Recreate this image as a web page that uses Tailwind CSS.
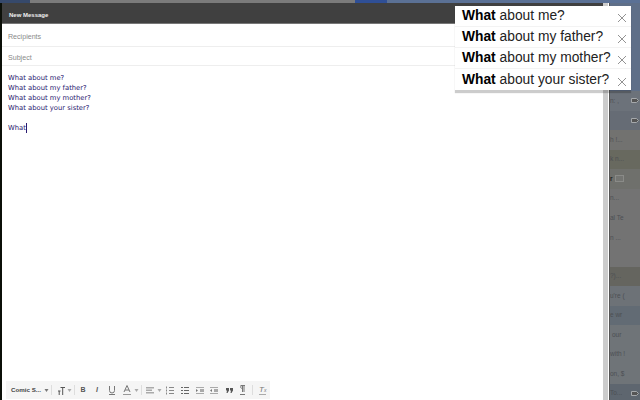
<!DOCTYPE html>
<html lang="en">
<head>
    <meta charset="UTF-8">
    <title>New Message</title>
    <script src="https://cdn.jsdelivr.net/npm/@tailwindcss/browser@4"></script>
</head>
<body class="w-[640px] h-[400px] overflow-hidden relative bg-[#6f7173] font-['Liberation_Sans',sans-serif]">
    <!-- strip of page above the compose window -->
    <div class="flex h-[3px]">
        <div class="w-[30px] bg-[#36496b]"></div>
        <div class="w-[325px] bg-[#7b7b7b]"></div>
        <div class="w-[32px] bg-[#2f4f96]"></div>
        <div class="flex-1 bg-[#5b7195]"></div>
    </div>

    <div class="flex h-[397px]">
        <div class="w-[2px] bg-[#0b0f08]"></div>

        <!-- compose window -->
        <div class="w-[601px] flex flex-col bg-white">
            <div class="h-[21px] shrink-0 bg-[#404040] border-b border-[#777] flex items-center pl-[7px] pt-[4px] text-[6px] font-bold text-[#f0f0f0]">New Message</div>
            <div class="h-[23px] shrink-0 border-b border-[#eee] flex items-center pl-[6px] pt-[4px] text-[7.1px] text-[#8a8a8a]">Recipients</div>
            <div class="h-[19px] shrink-0 border-b border-[#eee] flex items-center pl-[6px] pt-[4px] text-[7.1px] text-[#8a8a8a]">Subject</div>
            <div class="flex-1 pl-[6px] pt-[7px] font-['DejaVu_Sans',sans-serif] text-[6.8px] leading-[10px] text-[#2a1a70]">
                <p>What about me?</p>
                <p>What about my father?</p>
                <p>What about my mother?</p>
                <p>What about your sister?</p>
                <p class="mt-[10px] flex items-center">What<span class="w-px h-[10px] bg-[#2a1a70]"></span></p>
            </div>
            <!-- format toolbar -->
            <div class="h-[18px] w-[264px] ml-[4px] mb-[1px] shrink-0 bg-[#f5f5f5] flex items-center text-[#666] text-[7px]">
                <span class="ml-[5px] w-[30px] whitespace-nowrap text-[6.2px] font-bold text-[#444]">Comic S...</span>
                <svg class="ml-[3px] w-[5px] h-[3px]" viewBox="0 0 5 3" fill="#777"><path d="M0.500 0h4L2.500 3z"/></svg>
                <span class="w-px h-[10px] bg-[#ddd] ml-[2px]"></span>
                <svg class="ml-[6px] w-[7px] h-[9px]" viewBox="0 0 7 9" fill="none" stroke="#555"><path d="M0 5h2.500M1.200 5v4M2.500 1.500h4.500M4.700 1.500v7.500"/></svg>
                <svg class="ml-[2px] w-[5px] h-[3px]" viewBox="0 0 5 3" fill="#aaa"><path d="M0.500 0h4L2.500 3z"/></svg>
                <span class="w-px h-[10px] bg-[#ddd] ml-[2px]"></span>
                <span class="ml-[4px] w-[8px] font-bold text-center text-[#555]">B</span>
                <span class="ml-[6px] w-[8px] italic font-bold text-center text-[#555]">I</span>
                <svg class="ml-[7px] w-[8px] h-[9px]" viewBox="0 0 8 9" fill="none" stroke="#777"><path d="M1.500 0v4.500a2.500 2.500 0 0 0 5 0V0M1 8.500h6"/></svg>
                <svg class="ml-[7px] w-[8px] h-[10px]" viewBox="0 0 8 10" fill="none" stroke="#777"><path d="M1 7L4 0.500 7 7M2 5h4"/><path d="M0 9.500h8" stroke="#999"/></svg>
                <svg class="ml-[3px] w-[5px] h-[3px]" viewBox="0 0 5 3" fill="#aaa"><path d="M0.500 0h4L2.500 3z"/></svg>
                <span class="w-px h-[10px] bg-[#ddd] ml-[2px]"></span>
                <svg class="ml-[4px] w-[8px] h-[7px]" viewBox="0 0 8 7" fill="#aaa"><path d="M0 0h8v1.500H0zM0 2.500h6V4H0zM0 5h8v1.500H0z"/></svg>
                <svg class="ml-[3px] w-[5px] h-[3px]" viewBox="0 0 5 3" fill="#aaa"><path d="M0.500 0h4L2.500 3z"/></svg>
                <svg class="ml-[4px] w-[8px] h-[9px]" viewBox="0 0 8 9" stroke="#888"><path d="M3 1.500h5M3 4.500h5M3 7.500h5M0.500 0.500v2M0.500 3.500v2M0.500 6.500v2"/></svg>
                <svg class="ml-[7px] w-[8px] h-[9px]" viewBox="0 0 8 9" stroke="#666"><path d="M3 1.500h5M3 4.500h5M3 7.500h5M0 1.500h2M0 4.500h2M0 7.500h2"/></svg>
                <svg class="ml-[7px] w-[8px] h-[7px]" viewBox="0 0 8 7" fill="#aaa"><path d="M0 0h8v1H0zM0 6h8v1H0zM4 2h4v3H4z"/><path d="M0 2l2 1.500L0 5z" fill="#777"/></svg>
                <svg class="ml-[6px] w-[8px] h-[7px]" viewBox="0 0 8 7" fill="#aaa"><path d="M0 0h8v1H0zM0 6h8v1H0zM4 2h4v3H4z"/><path d="M2 2L0 3.500 2 5z" fill="#777"/></svg>
                <svg class="ml-[8px] w-[7px] h-[5px]" viewBox="0 0 7 5" fill="#555"><path d="M0 0h3v2.500L1.500 5H0.500L1 2.500H0zM4 0h3v2.500L5.500 5h-1L5 2.500H4z"/></svg>
                <svg class="ml-[7px] w-[5px] h-[10px]" viewBox="0 0 5 10" fill="none" stroke="#777"><path d="M0.500 0.500h4.500M2.500 0.500v6.500M4 0.500v6.500M2.500 3.500C0 3.500 0 0.500 2.500 0.500M0 9.500h5"/></svg>
                <span class="w-px h-[10px] bg-[#ddd] ml-[7px]"></span>
                <span class="ml-[6px] italic text-[8px] text-[#777] border-b border-[#aaa] leading-[8px]">T<span class="text-[5px]">x</span></span>
            </div>
        </div>

        <!-- compose scrollbar -->
        <div class="w-[5px] bg-[#cccccc]"></div>
        <div class="w-px bg-white"></div>
        <div class="w-px bg-[#555]"></div>

        <!-- dimmed message list behind the window -->
        <div class="flex-1 flex flex-col text-[6.5px] text-[#4c4f53] overflow-hidden">
            <div class="h-[88px] shrink-0 bg-[#5f6f88]"></div>
            <div class="h-[19.500px] shrink-0 bg-[#6c727a] flex items-center justify-between pr-[1px]">n: ,<svg class="w-[8px] h-[5px]" viewBox="0 0 8 5" fill="#555" stroke="#a5a8ab"><path d="M0.500 0.500h5l2 2-2 2h-5z"/></svg></div>
            <div class="h-[19.500px] shrink-0 bg-[#666c75] flex items-center justify-end pr-[1px]"><svg class="w-[8px] h-[5px]" viewBox="0 0 8 5" fill="#555" stroke="#a5a8ab"><path d="M0.500 0.500h5l2 2-2 2h-5z"/></svg></div>
            <div class="h-[19.500px] shrink-0 bg-[#727270] flex items-center">h !...</div>
            <div class="h-[19.500px] shrink-0 bg-[#68695f] flex items-center">k n...</div>
            <div class="h-[19.500px] shrink-0 bg-[#6f706c] flex items-center font-bold text-[#222]">r<span class="ml-[2px] w-[9px] h-[7px] border border-[#8a8b88] bg-[#747572]"></span></div>
            <div class="h-[19.500px] shrink-0 bg-[#737373] flex items-center">n...</div>
            <div class="h-[19.500px] shrink-0 bg-[#737373] flex items-center">al Te</div>
            <div class="h-[39px] shrink-0 bg-[#737373] pt-[5px]">n ...</div>
            <div class="h-[19.500px] shrink-0 bg-[#65655f] flex items-center">?)...</div>
            <div class="h-[19.500px] shrink-0 bg-[#6d7277] flex items-center">u're (</div>
            <div class="h-[19.500px] shrink-0 bg-[#626b74] flex items-center">e wr</div>
            <div class="h-[19.500px] shrink-0 bg-[#6f7478] flex items-center pl-[2px]">our</div>
            <div class="h-[19.500px] shrink-0 bg-[#6f7478] flex items-center">with !</div>
            <div class="h-[19.500px] shrink-0 bg-[#6f7478] flex items-center">on, $</div>
            <div class="h-[19.500px] shrink-0 bg-[#5e666f] flex items-center justify-between pr-[1px]">To...<svg class="w-[8px] h-[5px]" viewBox="0 0 8 5" fill="#555" stroke="#a5a8ab"><path d="M0.500 0.500h5l2 2-2 2h-5z"/></svg></div>
        </div>
    </div>

    <!-- autocomplete popup over the window -->
    <div class="absolute left-[455px] top-[6px] w-[176px] bg-white shadow-[0_3px_1px_rgba(0,0,0,0.2)] text-[13.8px] text-[#222]">
        <div class="h-[21px] flex items-center justify-between pl-[7px] pr-[4px] border-b border-[#f3f3f3]"><span class="pt-[1px]"><b class="text-black">What</b> about me?</span><svg class="w-[10px] h-[10px] mt-[4px]" viewBox="0 0 10 10" stroke="#777" stroke-width="0.8"><path d="M1 1l8 8M9 1l-8 8"/></svg></div>
        <div class="h-[21px] flex items-center justify-between pl-[7px] pr-[4px] border-b border-[#f3f3f3]"><span class="pt-[1px]"><b class="text-black">What</b> about my father?</span><svg class="w-[10px] h-[10px] mt-[4px]" viewBox="0 0 10 10" stroke="#777" stroke-width="0.8"><path d="M1 1l8 8M9 1l-8 8"/></svg></div>
        <div class="h-[21px] flex items-center justify-between pl-[7px] pr-[4px] border-b border-[#f3f3f3]"><span class="pt-[1px]"><b class="text-black">What</b> about my mother?</span><svg class="w-[10px] h-[10px] mt-[4px]" viewBox="0 0 10 10" stroke="#777" stroke-width="0.8"><path d="M1 1l8 8M9 1l-8 8"/></svg></div>
        <div class="h-[21px] flex items-center justify-between pl-[7px] pr-[4px]"><span class="pt-[1px]"><b class="text-black">What</b> about your sister?</span><svg class="w-[10px] h-[10px] mt-[4px]" viewBox="0 0 10 10" stroke="#777" stroke-width="0.8"><path d="M1 1l8 8M9 1l-8 8"/></svg></div>
    </div>
</body>
</html>
